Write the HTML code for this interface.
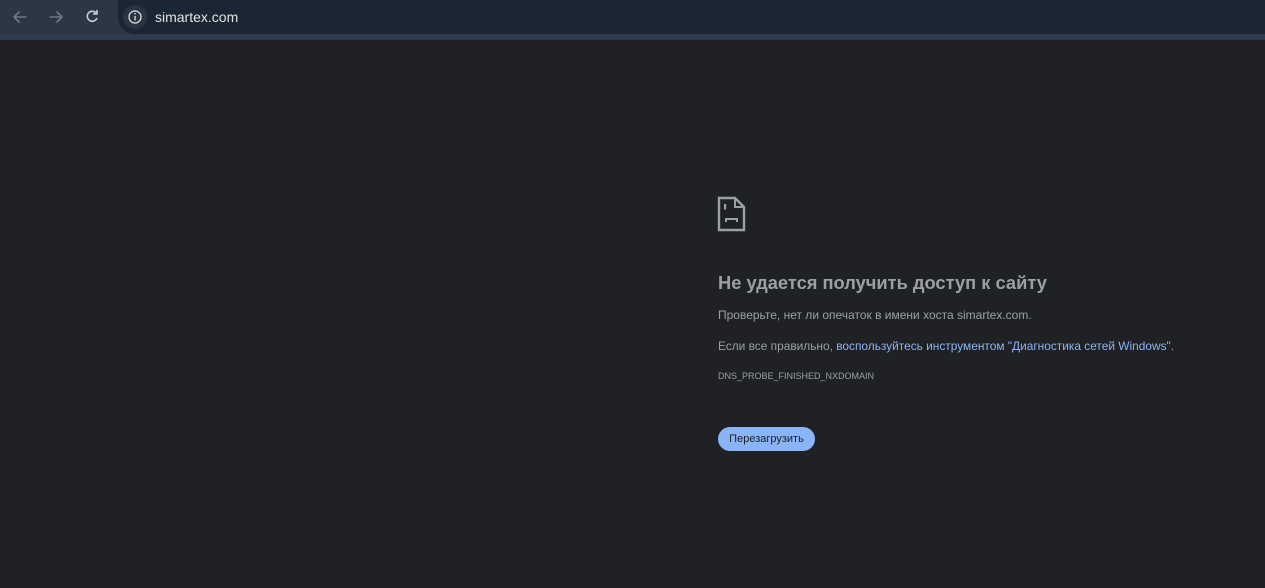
<!DOCTYPE html>
<html><head><meta charset="utf-8"><style>
body{margin:0;width:1265px;height:588px;background:#202124;font-family:"Liberation Sans",Arial,sans-serif;overflow:hidden;position:relative}
.tb{position:absolute;left:0;top:0;width:1265px;height:34px;background:#2c3645}
.strip{position:absolute;left:0;top:34px;width:1265px;height:6px;background:#2f3b4b}
.omni{position:absolute;left:118px;top:0;right:0;height:34px;background:#1b2634;border-radius:0 0 0 17px}
.omni:before{content:"";position:absolute;left:0;top:0;width:34px;height:34px;border-radius:17px;background:#1b2634}
.info{position:absolute;left:123px;top:5px;width:24px;height:24px;border-radius:12px;background:#2a3442}
.url{position:absolute;left:155px;top:9px;color:#e3e3e3;font-size:14px}
.c{position:absolute;left:718px}
h1{margin:0;position:absolute;left:718px;top:272px;font-size:18.3px;color:#9aa0a6;font-weight:bold;white-space:nowrap}
.p{font-size:12px;color:#9aa0a6;white-space:nowrap}
a{color:#8ab4f8;text-decoration:none}
.btn{position:absolute;left:718px;top:427px;width:97px;height:24px;border-radius:12px;background:#8ab4f8;color:#202124;font-size:11px;line-height:25px;text-align:center}
</style></head><body>
<div class="tb"></div><div class="strip"></div>
<div class="omni"></div>
<div class="info"></div>
<svg style="position:absolute;left:0;top:0" width="160" height="34">
<g stroke="#6f7782" stroke-width="1.6" fill="none" stroke-linecap="round" stroke-linejoin="round">
<path d="M26 17H14M19 12l-5 5 5 5"/><path d="M50 17h12M57 12l5 5-5 5"/></g>
<g stroke="#c9cdd2" stroke-width="1.6" fill="none"><path d="M96.5 13.5A5 5 0 1 0 97 18"/><path d="M97 10v4h-4" stroke-linejoin="round"/>
<circle cx="135" cy="17" r="6" stroke-width="1.4"/></g>
<rect x="134.3" y="16" width="1.5" height="4.5" fill="#c9cdd2"/><rect x="134.3" y="13" width="1.5" height="1.5" fill="#c9cdd2"/>
</svg>
<div class="url">simartex.com</div>
<svg style="position:absolute;left:717px;top:196px" width="30" height="36">
<path d="M2 2H18L27 11V34H2Z" stroke="#9aa0a6" stroke-width="2.4" fill="none"/>
<path d="M18 2V11H27" stroke="#9aa0a6" stroke-width="2" fill="none"/>
<rect x="7" y="8" width="2.2" height="5.5" fill="#9aa0a6"/>
<path d="M9 26v-3h11v3" stroke="#9aa0a6" stroke-width="2" fill="none"/>
</svg>
<h1>Не удается получить доступ к сайту</h1>
<div class="c p" style="top:308px">Проверьте, нет ли опечаток в имени хоста simartex.com.</div>
<div class="c p" style="top:339px;font-size:11.9px">Если все правильно, <a>воспользуйтесь инструментом "Диагностика сетей Windows"</a>.</div>
<div class="c p" style="top:371px;font-size:9px">DNS_PROBE_FINISHED_NXDOMAIN</div>
<div class="btn">Перезагрузить</div>
</body></html>
